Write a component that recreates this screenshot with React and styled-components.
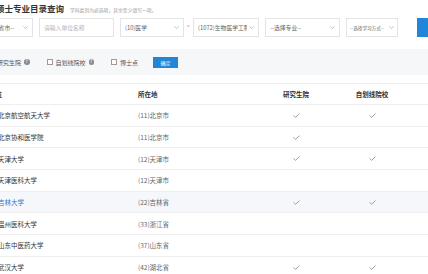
import React from "react";
import styled, { createGlobalStyle } from "styled-components";

const Global = createGlobalStyle`
  html, body { margin: 0; padding: 0; background: #fff; overflow: hidden; }
  body { font-family: "Noto Sans CJK SC", "Noto Sans", sans-serif; }
  * { box-sizing: border-box; }
`;

const Page = styled.div`
  width: 520px;
  margin-left: -50px;
`;

const TitleRow = styled.div`
  display: flex;
  align-items: baseline;
  gap: 4px;
  height: 16px;
  padding-left: 46px;
`;

const Title = styled.h1`
  margin: 0;
  font-size: 8.5px;
  line-height: 16px;
  font-weight: 700;
  color: #333;
`;

const Hint = styled.span`
  font-size: 4.8px;
  color: #9c9c9c;
  margin-left: 2px;
`;

const FilterRow = styled.div`
  display: flex;
  align-items: center;
  gap: 6px;
  margin-top: 2px;
  padding-left: 28px;
  height: 19px;
`;

const Field = styled.div`
  width: ${(p) => p.$w}px;
  height: 19px;
  border: 1px solid #e4e4e4;
  background: #fff;
  display: flex;
  align-items: center;
  gap: 2px;
  padding: 0 ${(p) => p.$pad || 4}px;
  font-size: ${(p) => p.$size || 5.8}px;
  color: ${(p) => (p.$placeholder ? "#b4b4b4" : "#666")};
  flex-shrink: 0;
`;

const FieldText = styled.span`
  flex: 1;
  min-width: 0;
  overflow: hidden;
  white-space: nowrap;
`;

const ChevronWrap = styled.span`
  flex: 0 0 5px;
  display: flex;
  align-items: center;
`;

const Star = styled.span`
  width: 3px;
  margin: 0 -3px;
  font-size: 6px;
  color: #f08a8a;
  text-align: center;
`;

const SearchButton = styled.div`
  width: 40px;
  height: 19px;
  margin-left: 13px;
  background: #1f86d9;
  color: #fff;
  font-size: 6px;
  display: flex;
  align-items: center;
  justify-content: center;
  flex-shrink: 0;
`;

const OptionBand = styled.div`
  margin-top: 12px;
  height: 26px;
  background: #f6f7f9;
  display: flex;
  align-items: center;
  gap: 17px;
  padding-left: 38px;
`;

const OptionGroup = styled.label`
  display: flex;
  align-items: center;
  gap: 3px;
  font-size: 6px;
  color: #555;
`;

const Box = styled.span`
  width: 6px;
  height: 6px;
  border: 0.8px solid #9a9a9a;
  background: #fff;
  flex-shrink: 0;
`;

const Help = styled.span`
  width: 5.5px;
  height: 5.5px;
  border-radius: 50%;
  background: #8a8a8a;
  color: #fff;
  font-size: 4.5px;
  line-height: 5.5px;
  text-align: center;
  font-weight: 700;
`;

const ConfirmButton = styled.div`
  width: 25px;
  height: 11px;
  background: #1f86d9;
  color: #fff;
  font-size: 5px;
  display: flex;
  align-items: center;
  justify-content: center;
  margin-left: -2px;
`;

const Table = styled.div`
  margin-top: 8px;
`;

const Row = styled.div`
  display: grid;
  grid-template-columns: 140px 120px 76px 76px 1fr;
  align-items: center;
  height: ${(p) => (p.$head ? 22 : 21.7)}px;
  padding-left: 48px;
  border-top: ${(p) => (p.$head ? "1px solid #eeeeee" : "none")};
  border-bottom: 1px solid #eeeeee;
  background: ${(p) => (p.$hover ? "#f5f7fa" : "#fff")};
`;

const HeadCell = styled.div`
  font-size: 6.5px;
  font-weight: 700;
  color: #333;
  text-align: ${(p) => (p.$center ? "center" : "left")};
  margin-left: ${(p) => p.$shift || 0}px;
  white-space: nowrap;
`;

const NameCell = styled.div`
  font-size: 6.5px;
  color: ${(p) => (p.$link ? "#2b7bd0" : "#333")};
  white-space: nowrap;
`;

const LocCell = styled.div`
  font-size: 6.5px;
  color: #666;
  white-space: nowrap;
`;

const CheckCell = styled.div`
  display: flex;
  justify-content: center;
  align-items: center;
`;

const Chevron = () => (
  <ChevronWrap>
    <svg width="5" height="3" viewBox="0 0 5 3">
      <polyline points="0.4,0.4 2.5,2.5 4.6,0.4" fill="none" stroke="#9a9a9a" strokeWidth="0.6" />
    </svg>
  </ChevronWrap>
);

const Tick = () => (
  <svg width="7" height="5" viewBox="0 0 7 5">
    <polyline points="0.5,2.4 2.6,4.3 6.5,0.6" fill="none" stroke="#888" strokeWidth="0.8" />
  </svg>
);

const rows = [
  { name: "北京航空航天大学", loc: "(11)北京市", a: true, b: true },
  { name: "北京协和医学院", loc: "(11)北京市", a: true, b: false },
  { name: "天津大学", loc: "(12)天津市", a: true, b: true },
  { name: "天津医科大学", loc: "(12)天津市", a: false, b: false },
  { name: "吉林大学", loc: "(22)吉林省", a: true, b: true, hover: true },
  { name: "温州医科大学", loc: "(33)浙江省", a: false, b: false },
  { name: "山东中医药大学", loc: "(37)山东省", a: false, b: false },
  { name: "武汉大学", loc: "(42)湖北省", a: true, b: true },
];

export default function App() {
  return (
    <>
      <Global />
      <Page>
        <TitleRow>
          <Title>硕士专业目录查询</Title>
          <Hint>学科类别为必选项，其余至少填写一项。</Hint>
        </TitleRow>
        <FilterRow>
          <Field $w={55}>
            <FieldText>--选择省市--</FieldText>
            <Chevron />
          </Field>
          <Field $w={75} $placeholder>
            <FieldText>请输入单位名称</FieldText>
          </Field>
          <Field $w={64}>
            <FieldText>(10)医学</FieldText>
            <Chevron />
          </Field>
          <Star>*</Star>
          <Field $w={66}>
            <FieldText>(1072)生物医学工程</FieldText>
            <Chevron />
          </Field>
          <Field $w={75}>
            <FieldText>--选择专业--</FieldText>
            <Chevron />
          </Field>
          <Field $w={52} $size={4.6} $pad={3}>
            <FieldText>--选择学习方式--</FieldText>
            <Chevron />
          </Field>
          <SearchButton>查询</SearchButton>
        </FilterRow>
        <OptionBand>
          <OptionGroup>
            <Box />
            <span>研究生院</span>
            <Help>?</Help>
          </OptionGroup>
          <OptionGroup>
            <Box />
            <span>自划线院校</span>
            <Help>?</Help>
          </OptionGroup>
          <OptionGroup>
            <Box />
            <span>博士点</span>
          </OptionGroup>
          <ConfirmButton>确定</ConfirmButton>
        </OptionBand>
        <Table>
          <Row $head>
            <HeadCell $shift={-22}>招生单位</HeadCell>
            <HeadCell>所在地</HeadCell>
            <HeadCell $center>研究生院</HeadCell>
            <HeadCell $center>自划线院校</HeadCell>
            <div />
          </Row>
          {rows.map((r) => (
            <Row key={r.name} $hover={r.hover}>
              <NameCell $link={r.hover}>{r.name}</NameCell>
              <LocCell>{r.loc}</LocCell>
              <CheckCell>{r.a && <Tick />}</CheckCell>
              <CheckCell>{r.b && <Tick />}</CheckCell>
              <div />
            </Row>
          ))}
        </Table>
      </Page>
    </>
  );
}
